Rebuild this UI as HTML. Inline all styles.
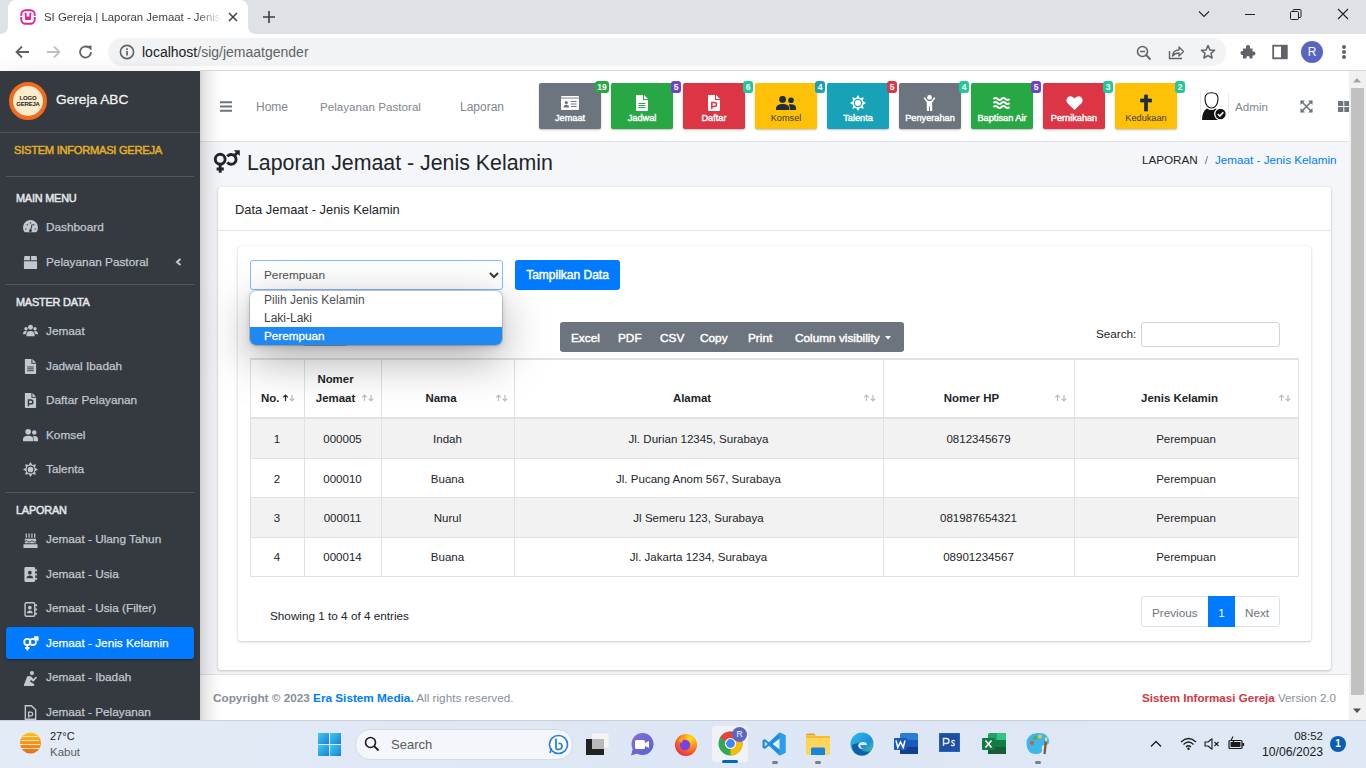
<!DOCTYPE html><html><head><meta charset="utf-8"><style>
html,body{margin:0;padding:0;width:1366px;height:768px;overflow:hidden;background:#fff;font-family:"Liberation Sans",sans-serif}
.a{position:absolute;white-space:nowrap}
svg.a{overflow:visible}
</style></head><body>
<div class="a" style="left:0px;top:0px;width:1366px;height:34px;background:#dee1e6;"></div>
<div class="a" style="left:8px;top:0;width:240px;height:34px;background:#fff;border-radius:8px 8px 0 0"></div>
<svg class="a" style="left:0px;top:26px;" width="8" height="8" viewBox="0 0 8 8"><path d="M0 8 Q8 8 8 0 L8 8Z" fill="#fff"/></svg>
<svg class="a" style="left:248px;top:26px;" width="8" height="8" viewBox="0 0 8 8"><path d="M8 8 Q0 8 0 0 L0 8Z" fill="#fff"/></svg>
<svg class="a" style="left:20px;top:9px;" width="16" height="16" viewBox="0 0 16 16"><rect x="1.3" y="1.3" width="13.4" height="13.4" rx="4.2" fill="none" stroke="#e3228f" stroke-width="1.9"/><rect x="0" y="6.9" width="3" height="1.1" fill="#fff"/><rect x="13" y="6.9" width="3" height="1.1" fill="#fff"/><path d="M4.6 3.8 H6.4 L6.9 8.6 L7.6 7.2 H8.4 L9.1 8.6 L9.6 3.8 H11.4 L10.8 11 H5.2Z" fill="#e3228f"/></svg>
<div class="a " style="left:44px;top:9.55px;font-size:11.4px;line-height:15px;color:#3c4043;font-weight:normal;width:178px;overflow:hidden;-webkit-mask-image:linear-gradient(90deg,#000 86%,transparent 100%)">SI Gereja | Laporan Jemaat - Jenis</div>
<svg class="a" style="left:227px;top:11px;" width="12" height="12" viewBox="0 0 12 12"><path d="M2 2 L10 10 M10 2 L2 10" stroke="#3c4043" stroke-width="1.5"/></svg>
<svg class="a" style="left:262px;top:10px;" width="14" height="14" viewBox="0 0 14 14"><path d="M7 1 V13 M1 7 H13" stroke="#3c4043" stroke-width="1.6"/></svg>
<svg class="a" style="left:1198px;top:10px;" width="12" height="8" viewBox="0 0 12 8"><path d="M1 1.5 L6 6.5 L11 1.5" stroke="#202124" stroke-width="1.1" fill="none"/></svg>
<div class="a" style="left:1245px;top:14px;width:10px;height:1px;background:#202124;"></div>
<svg class="a" style="left:1290px;top:9px;" width="12" height="12" viewBox="0 0 12 12"><rect x="0.5" y="2.5" width="8" height="8" rx="1" fill="none" stroke="#202124"/><path d="M3 2.5 V1.5 Q3 0.5 4 0.5 H10 Q11 0.5 11 1.5 V7.5 Q11 8.5 10 8.5 H8.5" fill="none" stroke="#202124"/></svg>
<svg class="a" style="left:1337px;top:8px;" width="12" height="12" viewBox="0 0 12 12"><path d="M1 1 L11 11 M11 1 L1 11" stroke="#202124" stroke-width="1.1"/></svg>
<div class="a" style="left:0px;top:34px;width:1366px;height:36px;background:#fff;"></div>
<div class="a" style="left:200px;top:70px;width:1166px;height:1px;background:#d9d9d9;"></div>
<svg class="a" style="left:14px;top:44px;" width="16" height="16" viewBox="0 0 16 16"><path d="M15 8 H2.5 M8 2.5 L2.5 8 L8 13.5" stroke="#5f6368" stroke-width="1.8" fill="none"/></svg>
<svg class="a" style="left:46px;top:44px;" width="16" height="16" viewBox="0 0 16 16"><path d="M1 8 H13.5 M8 2.5 L13.5 8 L8 13.5" stroke="#bdc1c6" stroke-width="1.8" fill="none"/></svg>
<svg class="a" style="left:78px;top:44px;" width="16" height="16" viewBox="0 0 16 16"><path d="M13 8 A5.5 5.5 0 1 1 11 3.8" stroke="#5f6368" stroke-width="1.8" fill="none"/><path d="M8.5 2 L13.5 1.5 L13.5 6.5Z" fill="#5f6368"/></svg>
<div class="a" style="left:108px;top:38px;width:1118px;height:28px;background:#f1f3f4;border-radius:14px"></div>
<svg class="a" style="left:119px;top:44px;" width="16" height="16" viewBox="0 0 16 16"><circle cx="8" cy="8" r="6.6" stroke="#5f6368" stroke-width="1.6" fill="none"/><rect x="7.2" y="7" width="1.7" height="4.5" fill="#5f6368"/><rect x="7.2" y="4.3" width="1.7" height="1.7" fill="#5f6368"/></svg>
<div class="a " style="left:142px;top:43.15px;font-size:14px;line-height:18px;color:#5f6368;font-weight:normal;"><span style="color:#202124">localhost</span>/sig/jemaatgender</div>
<svg class="a" style="left:1136px;top:45px;" width="16" height="16" viewBox="0 0 16 16"><circle cx="6.5" cy="6.5" r="5" stroke="#5f6368" stroke-width="1.6" fill="none"/><path d="M10 10 L14.5 14.5" stroke="#5f6368" stroke-width="1.8"/><path d="M4 6.5 H9" stroke="#5f6368" stroke-width="1.5"/></svg>
<svg class="a" style="left:1168px;top:44px;" width="17" height="16" viewBox="0 0 17 16"><path d="M1.5 7 V14.5 H14" stroke="#5f6368" stroke-width="1.4" fill="none"/><path d="M4.5 12 Q5 6 11 6 V3 L15.5 7.5 L11 12 V9 Q7 9 4.5 12Z" stroke="#5f6368" stroke-width="1.3" fill="none" stroke-linejoin="round"/></svg>
<svg class="a" style="left:1200px;top:44px;" width="16" height="16" viewBox="0 0 16 16"><path d="M8 1.5 L9.9 5.9 L14.6 6.3 L11 9.4 L12.1 14 L8 11.6 L3.9 14 L5 9.4 L1.4 6.3 L6.1 5.9Z" stroke="#5f6368" stroke-width="1.5" fill="none" stroke-linejoin="round"/></svg>
<svg class="a" style="left:1240px;top:44px;" width="16" height="16" viewBox="0 0 16 16"><path d="M3 4.5 H6 Q5.5 1 8 1 Q10.5 1 10 4.5 H12.5 V7.5 Q15.5 7 15.5 9.5 Q15.5 12 12.5 11.5 V14.5 H9.5 Q10 12 8 12 Q6 12 6.5 14.5 H3 V11 Q0.5 11.5 0.5 9 Q0.5 6.5 3 7Z" fill="#5f6368"/></svg>
<svg class="a" style="left:1272px;top:44px;" width="16" height="16" viewBox="0 0 16 16"><rect x="1.2" y="1.7" width="13.6" height="12.6" stroke="#5f6368" stroke-width="1.8" fill="none"/><rect x="9" y="2" width="5.5" height="12" fill="#5f6368"/></svg>
<div class="a" style="left:1301px;top:41px;width:22px;height:22px;border-radius:50%;background:#5865c2;color:#fff;font-size:12px;line-height:22px;text-align:center">R</div>
<div class="a" style="left:1342px;top:45px;width:4px;height:4px;border-radius:50%;background:#5f6368"></div>
<div class="a" style="left:1342px;top:50px;width:4px;height:4px;border-radius:50%;background:#5f6368"></div>
<div class="a" style="left:1342px;top:55px;width:4px;height:4px;border-radius:50%;background:#5f6368"></div>
<div class="a" style="left:0px;top:71px;width:200px;height:649px;background:#343a40;box-shadow:0 14px 28px rgba(0,0,0,.25),0 10px 10px rgba(0,0,0,.22)"></div>
<div class="a" style="left:9px;top:82px;width:30px;height:30px;border-radius:50%;border:4px solid #f26b1d;background:#fdeccb"></div>
<div class="a" style="left:9px;top:95px;width:38px;text-align:center;font-size:6px;line-height:6px;font-weight:bold;color:#222;letter-spacing:-0.2px">LOGO<br>GEREJA</div>
<div class="a " style="left:56px;top:91.25px;font-size:13.7px;line-height:18px;color:#f2f2f2;font-weight:normal;-webkit-text-stroke:0.3px #f2f2f2">Gereja ABC</div>
<div class="a" style="left:0px;top:132px;width:200px;height:1px;background:#4b545c;"></div>
<div class="a " style="left:14px;top:143.12px;font-size:11.2px;line-height:15px;color:#e0ae28;font-weight:normal;-webkit-text-stroke:0.5px #e0ae28;letter-spacing:-0.3px">SISTEM INFORMASI GEREJA</div>
<div class="a" style="left:6px;top:176px;width:188px;height:1px;background:#4f5962;"></div>
<div class="a" style="left:6px;top:284px;width:188px;height:1px;background:#4f5962;"></div>
<div class="a" style="left:6px;top:492px;width:188px;height:1px;background:#4f5962;"></div>
<div class="a " style="left:16px;top:191.22px;font-size:10.9px;line-height:14px;color:#e4e6e9;font-weight:normal;-webkit-text-stroke:0.5px #e4e6e9;letter-spacing:-0.2px">MAIN MENU</div>
<div class="a " style="left:16px;top:295.22px;font-size:10.9px;line-height:14px;color:#e4e6e9;font-weight:normal;-webkit-text-stroke:0.5px #e4e6e9;letter-spacing:-0.2px">MASTER DATA</div>
<div class="a " style="left:16px;top:503.22px;font-size:10.9px;line-height:14px;color:#e4e6e9;font-weight:normal;-webkit-text-stroke:0.5px #e4e6e9;letter-spacing:-0.2px">LAPORAN</div>
<svg class="a" style="left:22.5px;top:220.4px;" width="15" height="15" viewBox="0 0 16 16"><path d="M1.8 13 A8 8 0 1 1 14.2 13 Z" fill="#c2c7d0"/><path d="M8 11.5 L9.8 4.5" stroke="#343a40" stroke-width="1.1"/><circle cx="7.9" cy="11.4" r="1.5" fill="#343a40"/><circle cx="3" cy="9.5" r=".75" fill="#343a40"/><circle cx="13" cy="9.5" r=".75" fill="#343a40"/><circle cx="4.5" cy="5" r=".75" fill="#343a40"/><circle cx="8" cy="3.2" r=".75" fill="#343a40"/><circle cx="11.5" cy="5" r=".75" fill="#343a40"/></svg>
<div class="a " style="left:46px;top:220.21px;font-size:11.8px;line-height:15px;color:#c2c7d0;font-weight:normal;-webkit-text-stroke:0.25px #c2c7d0">Dashboard</div>
<svg class="a" style="left:22.5px;top:254.89999999999998px;" width="15" height="15" viewBox="0 0 16 16"><path d="M1.5 1 H7.4 V5.5 H1 Z M8.6 1 H14.5 L15 5.5 H8.6Z M1 6.6 H15 V15 H1Z" fill="#c2c7d0"/></svg>
<div class="a " style="left:46px;top:254.71px;font-size:11.8px;line-height:15px;color:#c2c7d0;font-weight:normal;-webkit-text-stroke:0.25px #c2c7d0">Pelayanan Pastoral</div>
<svg class="a" style="left:22.5px;top:324.4px;" width="15" height="15" viewBox="0 0 16 16"><circle cx="8" cy="3.4" r="2.6" fill="#c2c7d0"/><circle cx="3.2" cy="5" r="1.8" fill="#c2c7d0"/><circle cx="12.8" cy="5" r="1.8" fill="#c2c7d0"/><path d="M3.5 13 Q3.5 7.4 8 7.4 Q12.5 7.4 12.5 13Z" fill="#c2c7d0"/><path d="M0 11 Q0 7.5 3 7.5 Q4.2 7.5 4.5 8 Q2.8 9.5 2.8 11Z M16 11 Q16 7.5 13 7.5 Q11.8 7.5 11.5 8 Q13.2 9.5 13.2 11Z" fill="#c2c7d0"/></svg>
<div class="a " style="left:46px;top:324.21px;font-size:11.8px;line-height:15px;color:#c2c7d0;font-weight:normal;-webkit-text-stroke:0.25px #c2c7d0">Jemaat</div>
<svg class="a" style="left:22.5px;top:358.9px;" width="15" height="15" viewBox="0 0 16 16"><path d="M2 0 H9 V5 H14 V15 Q14 16 13 16 H3 Q2 16 2 15Z M10 0 L14 4 H10Z" fill="#c2c7d0"/><path d="M4.5 8.5 H11.5 M4.5 10.5 H11.5 M4.5 12.5 H11.5" stroke="#343a40" stroke-width="1"/></svg>
<div class="a " style="left:46px;top:358.71px;font-size:11.8px;line-height:15px;color:#c2c7d0;font-weight:normal;-webkit-text-stroke:0.25px #c2c7d0">Jadwal Ibadah</div>
<svg class="a" style="left:22.5px;top:393.4px;" width="15" height="15" viewBox="0 0 16 16"><path d="M2 0 H9 V5 H14 V15 Q14 16 13 16 H3 Q2 16 2 15Z M10 0 L14 4 H10Z" fill="#c2c7d0"/><path d="M5.8 14 V7.5 H8.5 Q10.5 7.5 10.5 9.5 Q10.5 11.5 8.5 11.5 H5.8" stroke="#343a40" stroke-width="1.5" fill="none"/></svg>
<div class="a " style="left:46px;top:393.21px;font-size:11.8px;line-height:15px;color:#c2c7d0;font-weight:normal;-webkit-text-stroke:0.25px #c2c7d0">Daftar Pelayanan</div>
<svg class="a" style="left:22.5px;top:427.9px;" width="15" height="15" viewBox="0 0 16 16"><circle cx="5.5" cy="4" r="3" fill="#c2c7d0"/><circle cx="12" cy="4.8" r="2.4" fill="#c2c7d0"/><path d="M0 14 V12 Q0 8.2 5.5 8.2 Q11 8.2 11 12 V14Z" fill="#c2c7d0"/><path d="M11.5 14 V12 Q11.5 10 10.3 8.8 Q11 8.4 12 8.4 Q16 8.4 16 11.5 V14Z" fill="#c2c7d0"/></svg>
<div class="a " style="left:46px;top:427.71px;font-size:11.8px;line-height:15px;color:#c2c7d0;font-weight:normal;-webkit-text-stroke:0.25px #c2c7d0">Komsel</div>
<svg class="a" style="left:22.5px;top:462.4px;" width="15" height="15" viewBox="0 0 16 16"><path d="M8.00 0.00 L9.99 3.20 L13.66 2.34 L12.80 6.01 L16.00 8.00 L12.80 9.99 L13.66 13.66 L9.99 12.80 L8.00 16.00 L6.01 12.80 L2.34 13.66 L3.20 9.99 L0.00 8.00 L3.20 6.01 L2.34 2.34 L6.01 3.20Z" fill="#c2c7d0"/><circle cx="8" cy="8" r="3.6" fill="none" stroke="#343a40" stroke-width="1.2"/></svg>
<div class="a " style="left:46px;top:462.21px;font-size:11.8px;line-height:15px;color:#c2c7d0;font-weight:normal;-webkit-text-stroke:0.25px #c2c7d0">Talenta</div>
<svg class="a" style="left:22.5px;top:532.6px;" width="15" height="15" viewBox="0 0 16 16"><path d="M2 6 H14 V11 H2Z M0.5 12 H15.5 V16 H0.5Z" fill="#c2c7d0"/><path d="M3.5 0.5 V5 M6.5 0.5 V5 M9.5 0.5 V5 M12.5 0.5 V5" stroke="#c2c7d0" stroke-width="1.3"/><path d="M2 9 Q4 7.5 5 9 Q6.5 10.5 8 9 Q9.5 7.5 11 9 Q12.5 10.5 14 9" stroke="#343a40" stroke-width="1" fill="none"/></svg>
<div class="a " style="left:46px;top:532.41px;font-size:11.8px;line-height:15px;color:#c2c7d0;font-weight:normal;-webkit-text-stroke:0.25px #c2c7d0">Jemaat - Ulang Tahun</div>
<svg class="a" style="left:22.5px;top:567.1px;" width="15" height="15" viewBox="0 0 16 16"><rect x="1.5" y="0" width="11.5" height="16" rx="1.5" fill="#c2c7d0"/><rect x="13" y="2.5" width="2" height="2" fill="#c2c7d0"/><rect x="13" y="7" width="2" height="2" fill="#c2c7d0"/><rect x="13" y="11.5" width="2" height="2" fill="#c2c7d0"/><circle cx="7.3" cy="6" r="2" fill="#343a40"/><path d="M3.8 12 Q3.8 9 7.3 9 Q10.8 9 10.8 12Z" fill="#343a40"/></svg>
<div class="a " style="left:46px;top:566.91px;font-size:11.8px;line-height:15px;color:#c2c7d0;font-weight:normal;-webkit-text-stroke:0.25px #c2c7d0">Jemaat - Usia</div>
<svg class="a" style="left:22.5px;top:601.6px;" width="15" height="15" viewBox="0 0 16 16"><rect x="2.2" y="0.75" width="10.3" height="14.5" rx="1.5" fill="none" stroke="#c2c7d0" stroke-width="1.5"/><rect x="13" y="2.5" width="2" height="2" fill="#c2c7d0"/><rect x="13" y="7" width="2" height="2" fill="#c2c7d0"/><rect x="13" y="11.5" width="2" height="2" fill="#c2c7d0"/><circle cx="7.3" cy="6" r="2" fill="#c2c7d0"/><path d="M4.3 12 Q4.3 9 7.3 9 Q10.3 9 10.3 12Z" fill="#c2c7d0"/></svg>
<div class="a " style="left:46px;top:601.41px;font-size:11.8px;line-height:15px;color:#c2c7d0;font-weight:normal;-webkit-text-stroke:0.25px #c2c7d0">Jemaat - Usia (Filter)</div>
<div class="a" style="left:6px;top:627px;width:188px;height:32px;background:#007bff;border-radius:3px;box-shadow:0 1px 3px rgba(0,0,0,.12),0 1px 2px rgba(0,0,0,.24)"></div>
<svg class="a" style="left:22.5px;top:636.1px;" width="15" height="15" viewBox="0 0 16 16"><circle cx="4.6" cy="6.3" r="3.3" fill="none" stroke="#fff" stroke-width="1.9"/><path d="M4.6 9.6 V15.5 M2.3 12.8 H6.9" stroke="#fff" stroke-width="1.9"/><circle cx="10.5" cy="6.3" r="3.3" fill="none" stroke="#fff" stroke-width="1.9"/><path d="M12.8 4 L15.3 1.5 M11.8 1.1 H15.7 V5" stroke="#fff" stroke-width="1.9" fill="none"/></svg>
<div class="a " style="left:46px;top:635.91px;font-size:11.8px;line-height:15px;color:#fff;font-weight:normal;-webkit-text-stroke:0.25px #fff">Jemaat - Jenis Kelamin</div>
<svg class="a" style="left:22.5px;top:670.6px;" width="15" height="15" viewBox="0 0 16 16"><circle cx="9.5" cy="2.2" r="2.2" fill="#c2c7d0"/><path d="M5 5.5 Q7 4.8 9 6 L11 8.5 L14 5.8 L15 7 L11.5 11 Q10.8 11.7 10 11 L8.5 9.3 L7.6 11.5 L11 13.2 Q12.5 14 12 15.2 Q11.6 16 10.6 16 H1.5 Q0.8 16 1 15 L4.2 6.5Z" fill="#c2c7d0"/></svg>
<div class="a " style="left:46px;top:670.41px;font-size:11.8px;line-height:15px;color:#c2c7d0;font-weight:normal;-webkit-text-stroke:0.25px #c2c7d0">Jemaat - Ibadah</div>
<svg class="a" style="left:22.5px;top:705.1px;" width="15" height="15" viewBox="0 0 16 16"><path d="M2.5 0.75 H9 L13.5 5 V15.25 H2.5Z" stroke="#c2c7d0" stroke-width="1.5" fill="none"/><path d="M6 13.5 V7.5 H8.3 Q10.3 7.5 10.3 9.5 Q10.3 11.5 8.3 11.5 H6" stroke="#c2c7d0" stroke-width="1.4" fill="none"/></svg>
<div class="a " style="left:46px;top:704.91px;font-size:11.8px;line-height:15px;color:#c2c7d0;font-weight:normal;-webkit-text-stroke:0.25px #c2c7d0">Jemaat - Pelayanan</div>
<svg class="a" style="left:175px;top:258px;" width="7" height="8" viewBox="0 0 7 8"><path d="M5.5 1 L2 4 L5.5 7" stroke="#c2c7d0" stroke-width="2" fill="none"/></svg>
<div class="a" style="left:200px;top:71px;width:1150px;height:649px;background:#f4f6f9;"></div>
<div class="a" style="left:200px;top:71px;width:1150px;height:70px;background:#fff;"></div>
<div class="a" style="left:200px;top:141px;width:1150px;height:1px;background:#dee2e6;"></div>
<svg class="a" style="left:220px;top:101px;" width="12" height="11" viewBox="0 0 12 11"><path d="M0 1.3 H12 M0 5.5 H12 M0 9.7 H12" stroke="#6c757d" stroke-width="2"/></svg>
<div class="a " style="left:256px;top:98.84px;font-size:12px;line-height:16px;color:#7f868c;font-weight:normal;">Home</div>
<div class="a " style="left:320px;top:99.46px;font-size:11.65px;line-height:15px;color:#7f868c;font-weight:normal;">Pelayanan Pastoral</div>
<div class="a " style="left:460px;top:98.84px;font-size:12px;line-height:16px;color:#7f868c;font-weight:normal;">Laporan</div>
<div class="a" style="left:539px;top:83px;width:62px;height:46px;background:#6c757d;border-radius:2px;box-shadow:0 1px 2px rgba(0,0,0,.25)"></div>
<div class="a" style="left:539.0px;width:62px;text-align:center;top:112.01px;font-size:9.2px;line-height:12px;color:#fff;font-weight:normal;-webkit-text-stroke:0.4px #fff">Jemaat</div>
<div class="a" style="left:595px;top:81px;width:14px;height:12px;border-radius:3px;background:#28a745;color:#fff;font-size:8.5px;font-weight:bold;line-height:12px;text-align:center">19</div>
<div class="a" style="left:611px;top:83px;width:62px;height:46px;background:#28a745;border-radius:2px;box-shadow:0 1px 2px rgba(0,0,0,.25)"></div>
<div class="a" style="left:611.0px;width:62px;text-align:center;top:112.01px;font-size:9.2px;line-height:12px;color:#fff;font-weight:normal;-webkit-text-stroke:0.4px #fff">Jadwal</div>
<div class="a" style="left:671px;top:81px;width:10px;height:12px;border-radius:3px;background:#6f42c1;color:#fff;font-size:8.5px;font-weight:bold;line-height:12px;text-align:center">5</div>
<div class="a" style="left:683px;top:83px;width:62px;height:46px;background:#dc3545;border-radius:2px;box-shadow:0 1px 2px rgba(0,0,0,.25)"></div>
<div class="a" style="left:683.0px;width:62px;text-align:center;top:112.01px;font-size:9.2px;line-height:12px;color:#fff;font-weight:normal;-webkit-text-stroke:0.4px #fff">Daftar</div>
<div class="a" style="left:743px;top:81px;width:10px;height:12px;border-radius:3px;background:#20c997;color:#fff;font-size:8.5px;font-weight:bold;line-height:12px;text-align:center">6</div>
<div class="a" style="left:755px;top:83px;width:62px;height:46px;background:#ffc107;border-radius:2px;box-shadow:0 1px 2px rgba(0,0,0,.25)"></div>
<div class="a" style="left:755.0px;width:62px;text-align:center;top:112.01px;font-size:9.2px;line-height:12px;color:#1f2d3d;font-weight:normal;color:#343a40">Komsel</div>
<div class="a" style="left:815px;top:81px;width:10px;height:12px;border-radius:3px;background:#17a2b8;color:#fff;font-size:8.5px;font-weight:bold;line-height:12px;text-align:center">4</div>
<div class="a" style="left:827px;top:83px;width:62px;height:46px;background:#17a2b8;border-radius:2px;box-shadow:0 1px 2px rgba(0,0,0,.25)"></div>
<div class="a" style="left:827.0px;width:62px;text-align:center;top:112.01px;font-size:9.2px;line-height:12px;color:#fff;font-weight:normal;-webkit-text-stroke:0.4px #fff">Talenta</div>
<div class="a" style="left:887px;top:81px;width:10px;height:12px;border-radius:3px;background:#dc3545;color:#fff;font-size:8.5px;font-weight:bold;line-height:12px;text-align:center">5</div>
<div class="a" style="left:899px;top:83px;width:62px;height:46px;background:#6c757d;border-radius:2px;box-shadow:0 1px 2px rgba(0,0,0,.25)"></div>
<div class="a" style="left:899.0px;width:62px;text-align:center;top:112.01px;font-size:9.2px;line-height:12px;color:#fff;font-weight:normal;-webkit-text-stroke:0.4px #fff">Penyerahan</div>
<div class="a" style="left:959px;top:81px;width:10px;height:12px;border-radius:3px;background:#20c997;color:#fff;font-size:8.5px;font-weight:bold;line-height:12px;text-align:center">4</div>
<div class="a" style="left:971px;top:83px;width:62px;height:46px;background:#28a745;border-radius:2px;box-shadow:0 1px 2px rgba(0,0,0,.25)"></div>
<div class="a" style="left:971.0px;width:62px;text-align:center;top:112.01px;font-size:9.2px;line-height:12px;color:#fff;font-weight:normal;-webkit-text-stroke:0.4px #fff">Baptisan Air</div>
<div class="a" style="left:1031px;top:81px;width:10px;height:12px;border-radius:3px;background:#6f42c1;color:#fff;font-size:8.5px;font-weight:bold;line-height:12px;text-align:center">5</div>
<div class="a" style="left:1043px;top:83px;width:62px;height:46px;background:#dc3545;border-radius:2px;box-shadow:0 1px 2px rgba(0,0,0,.25)"></div>
<div class="a" style="left:1043.0px;width:62px;text-align:center;top:112.01px;font-size:9.2px;line-height:12px;color:#fff;font-weight:normal;-webkit-text-stroke:0.4px #fff">Pernikahan</div>
<div class="a" style="left:1103px;top:81px;width:10px;height:12px;border-radius:3px;background:#20c997;color:#fff;font-size:8.5px;font-weight:bold;line-height:12px;text-align:center">3</div>
<div class="a" style="left:1115px;top:83px;width:62px;height:46px;background:#ffc107;border-radius:2px;box-shadow:0 1px 2px rgba(0,0,0,.25)"></div>
<div class="a" style="left:1115.0px;width:62px;text-align:center;top:112.01px;font-size:9.2px;line-height:12px;color:#1f2d3d;font-weight:normal;color:#343a40">Kedukaan</div>
<div class="a" style="left:1175px;top:81px;width:10px;height:12px;border-radius:3px;background:#20c997;color:#fff;font-size:8.5px;font-weight:bold;line-height:12px;text-align:center">2</div>
<svg class="a" style="left:561px;top:96px;" width="18" height="14" viewBox="0 0 18 14"><rect x="0" y="0" width="18" height="14" rx="1" fill="#fff"/><rect x="0" y="1.6" width="18" height="0.9" fill="#6c757d"/><circle cx="5.3" cy="6.6" r="1.6" fill="#6c757d"/><path d="M2.5 11.5 Q2.5 8.8 5.3 8.8 Q8.1 8.8 8.1 11.5Z" fill="#6c757d"/><path d="M10 5.5 H15.5 M10 8 H15.5 M10 10.5 H15.5" stroke="#6c757d" stroke-width="1"/></svg>
<svg class="a" style="left:636px;top:95px;" width="12" height="16" viewBox="2 0 12 16"><path d="M2 0 H9 V5 H14 V15 Q14 16 13 16 H3 Q2 16 2 15Z M10 0 L14 4 H10Z" fill="#fff"/><path d="M4.5 8.5 H11.5 M4.5 10.5 H11.5 M4.5 12.5 H11.5" stroke="#28a745" stroke-width="1"/></svg>
<svg class="a" style="left:708px;top:95px;" width="12" height="16" viewBox="2 0 12 16"><path d="M2 0 H9 V5 H14 V15 Q14 16 13 16 H3 Q2 16 2 15Z M10 0 L14 4 H10Z" fill="#fff"/><path d="M5.8 14 V7.5 H8.5 Q10.5 7.5 10.5 9.5 Q10.5 11.5 8.5 11.5 H5.8" stroke="#dc3545" stroke-width="1.5" fill="none"/></svg>
<svg class="a" style="left:776px;top:96px;" width="20" height="14" viewBox="0 0 20 14"><circle cx="6.6" cy="3.4" r="3.4" fill="#1f2d3d"/><circle cx="15" cy="4.2" r="2.8" fill="#1f2d3d"/><path d="M0 14 V12.5 Q0 8 6.6 8 Q13.2 8 13.2 12.5 V14Z" fill="#1f2d3d"/><path d="M13.8 14 V12.5 Q13.8 10 12.6 8.6 Q13.6 8.2 15 8.2 Q20 8.2 20 11.8 V14Z" fill="#1f2d3d"/></svg>
<svg class="a" style="left:850px;top:95px;" width="16" height="16" viewBox="0 0 16 16"><path d="M8.00 0.00 L9.99 3.20 L13.66 2.34 L12.80 6.01 L16.00 8.00 L12.80 9.99 L13.66 13.66 L9.99 12.80 L8.00 16.00 L6.01 12.80 L2.34 13.66 L3.20 9.99 L0.00 8.00 L3.20 6.01 L2.34 2.34 L6.01 3.20Z" fill="#fff"/><circle cx="8" cy="8" r="3.6" fill="none" stroke="#17a2b8" stroke-width="1.2"/></svg>
<svg class="a" style="left:923px;top:95px;" width="13" height="16" viewBox="0 0 13 16"><circle cx="6.5" cy="2.4" r="2.4" fill="#fff"/><path d="M0.6 3 L1.8 2.2 L5 6 H8 L11.2 2.2 L12.4 3 L9.2 7.5 V16 H7 V11.5 H6 V16 H3.8 V7.5Z" fill="#fff"/></svg>
<svg class="a" style="left:993px;top:97px;" width="18" height="12" viewBox="0 0 18 12"><path d="M0.5 2 Q2.5 0 4.5 2 T8.5 2 T12.5 2 T16.5 2 M0.5 6 Q2.5 4 4.5 6 T8.5 6 T12.5 6 T16.5 6 M0.5 10 Q2.5 8 4.5 10 T8.5 10 T12.5 10 T16.5 10" stroke="#fff" stroke-width="1.8" fill="none"/></svg>
<svg class="a" style="left:1066px;top:96px;" width="17" height="14" viewBox="0 0 17 14"><path d="M8.5 14 L1.5 7.2 Q-0.5 5 0.8 2.5 Q2.5 -0.3 5.5 0.4 Q7.5 1 8.5 2.6 Q9.5 1 11.5 0.4 Q14.5 -0.3 16.2 2.5 Q17.5 5 15.5 7.2Z" fill="#fff"/></svg>
<svg class="a" style="left:1140px;top:95px;" width="12" height="16" viewBox="0 0 12 16"><path d="M4.5 0 H7.5 V4 H11.5 V7 H7.5 V16 H4.5 V7 H0.5 V4 H4.5Z" fill="#1f2d3d" stroke="#1f2d3d" stroke-width=".8" stroke-linejoin="round"/></svg>
<div class="a" style="left:1200px;top:92px;width:1px;height:28px;background:#e9e9e9;"></div>
<div class="a" style="left:1228px;top:92px;width:1px;height:28px;background:#ececec;"></div>
<svg class="a" style="left:1201px;top:92px;" width="27" height="28" viewBox="0 0 27 28"><path d="M4 6.5 Q4 0.8 10.5 0.8 Q17 0.8 17 6.5 Q17 12.5 13.5 15 Q10.5 17 7.5 15 Q4 12.5 4 6.5Z" fill="#fff" stroke="#111" stroke-width="1.1"/><path d="M1 28 Q1 19.5 6 16.5 Q10.5 19.5 15 16.5 Q19 18 21 21 V28Z" fill="#111"/><circle cx="19.5" cy="22" r="5.8" fill="#111" stroke="#fff" stroke-width="1.3"/><path d="M16.8 22 L18.8 24 L22.3 20.3" stroke="#fff" stroke-width="1.6" fill="none"/></svg>
<div class="a " style="left:1235px;top:99.36px;font-size:11.65px;line-height:15px;color:#7f868c;font-weight:normal;">Admin</div>
<svg class="a" style="left:1300px;top:100px;" width="13" height="13" viewBox="0 0 13 13"><path d="M1 1 L12 12 M12 1 L1 12" stroke="#6c757d" stroke-width="1.6"/><path d="M0.5 0.5 H5 L0.5 5Z M12.5 0.5 H8 L12.5 5Z M0.5 12.5 H5 L0.5 8Z M12.5 12.5 H8 L12.5 8Z" fill="#6c757d"/></svg>
<svg class="a" style="left:1338px;top:101px;" width="12" height="11" viewBox="0 0 12 11"><rect x="0" y="0" width="5.3" height="5" fill="#6c757d"/><rect x="6.3" y="0" width="5.3" height="5" fill="#6c757d"/><rect x="0" y="6" width="5.3" height="5" fill="#6c757d"/><rect x="6.3" y="6" width="5.3" height="5" fill="#6c757d"/></svg>
<svg class="a" style="left:214px;top:150px;" width="26" height="23" viewBox="0 0 26 23"><circle cx="6.2" cy="9.2" r="4.9" fill="none" stroke="#212529" stroke-width="2.9"/><path d="M6.2 14 V22.8 M2.6 19 H9.8" stroke="#212529" stroke-width="2.9"/><path d="M13.3 6.4 A4.9 4.9 0 1 1 13.3 12.4" fill="none" stroke="#212529" stroke-width="2.9"/><path d="M20.5 5.5 L24 2" stroke="#212529" stroke-width="2.9"/><path d="M19.8 0.2 H25.8 V6 L23.8 4 L21.8 2.2Z" fill="#212529"/></svg>
<div class="a " style="left:247px;top:148.61px;font-size:21.34px;line-height:28px;color:#212529;font-weight:normal;">Laporan Jemaat - Jenis Kelamin</div>
<div class="a" style="left:1036.5px;width:300px;text-align:right;top:152.45px;font-size:11.7px;line-height:15px;color:#212529;font-weight:normal;"><span style="color:#212529">LAPORAN</span><span style="color:#6c757d;padding:0 7px">/</span><span style="color:#007bff">Jemaat - Jenis Kelamin</span></div>
<div class="a" style="left:218px;top:187px;width:1113px;height:483px;background:#fff;border-radius:3px;box-shadow:0 0 1px rgba(0,0,0,.125),0 1px 3px rgba(0,0,0,.2)"></div>
<div class="a" style="left:218px;top:230px;width:1113px;height:1px;background:#e3e5e8;"></div>
<div class="a " style="left:235px;top:200.53px;font-size:12.9px;line-height:17px;color:#212529;font-weight:normal;">Data Jemaat - Jenis Kelamin</div>
<div class="a" style="left:238px;top:246px;width:1073px;height:395px;background:#fff;border-radius:3px;box-shadow:0 0 1px rgba(0,0,0,.125),0 1px 3px rgba(0,0,0,.2)"></div>
<div class="a " style="left:1096px;top:326.45px;font-size:11.7px;line-height:15px;color:#212529;font-weight:normal;">Search:</div>
<div class="a" style="left:1141px;top:322px;width:137px;height:23px;border:1px solid #ced4da;border-radius:3px;background:#fff"></div>
<div class="a" style="left:560px;top:322px;width:344px;height:30px;background:#6c757d;border-radius:3px"></div>
<div class="a " style="left:571px;top:330.61px;font-size:11.8px;line-height:15px;color:#fff;font-weight:normal;-webkit-text-stroke:0.45px #fff">Excel</div>
<div class="a " style="left:618px;top:330.61px;font-size:11.8px;line-height:15px;color:#fff;font-weight:normal;-webkit-text-stroke:0.45px #fff">PDF</div>
<div class="a " style="left:660px;top:330.61px;font-size:11.8px;line-height:15px;color:#fff;font-weight:normal;-webkit-text-stroke:0.45px #fff">CSV</div>
<div class="a " style="left:700px;top:330.61px;font-size:11.8px;line-height:15px;color:#fff;font-weight:normal;-webkit-text-stroke:0.45px #fff">Copy</div>
<div class="a " style="left:748px;top:330.61px;font-size:11.8px;line-height:15px;color:#fff;font-weight:normal;-webkit-text-stroke:0.45px #fff">Print</div>
<div class="a " style="left:795px;top:330.61px;font-size:11.8px;line-height:15px;color:#fff;font-weight:normal;-webkit-text-stroke:0.45px #fff">Column visibility</div>
<svg class="a" style="left:885px;top:336px;" width="6" height="4" viewBox="0 0 6 4"><path d="M0 0 H6 L3 3.5Z" fill="#fff"/></svg>
<div class="a" style="left:250px;top:358px;width:1049px;height:218px;background:#fff;"></div>
<div class="a" style="left:251px;top:419px;width:1047px;height:39px;background:#f2f2f2;"></div>
<div class="a" style="left:251px;top:497px;width:1047px;height:40px;background:#f2f2f2;"></div>
<div class="a" style="left:250px;top:358px;width:1049px;height:2px;background:#dee2e6;"></div>
<div class="a" style="left:250px;top:417px;width:1049px;height:2px;background:#dee2e6;"></div>
<div class="a" style="left:250px;top:458px;width:1049px;height:1px;background:#dee2e6;"></div>
<div class="a" style="left:250px;top:497px;width:1049px;height:1px;background:#dee2e6;"></div>
<div class="a" style="left:250px;top:537px;width:1049px;height:1px;background:#dee2e6;"></div>
<div class="a" style="left:250px;top:576px;width:1049px;height:1px;background:#dee2e6;"></div>
<div class="a" style="left:250px;top:358px;width:1px;height:219px;background:#dee2e6;"></div>
<div class="a" style="left:304px;top:358px;width:1px;height:219px;background:#dee2e6;"></div>
<div class="a" style="left:381px;top:358px;width:1px;height:219px;background:#dee2e6;"></div>
<div class="a" style="left:514px;top:358px;width:1px;height:219px;background:#dee2e6;"></div>
<div class="a" style="left:883px;top:358px;width:1px;height:219px;background:#dee2e6;"></div>
<div class="a" style="left:1074px;top:358px;width:1px;height:219px;background:#dee2e6;"></div>
<div class="a" style="left:1298px;top:358px;width:1px;height:219px;background:#dee2e6;"></div>
<div class="a " style="left:261px;top:391.33px;font-size:11.45px;line-height:15px;color:#212529;font-weight:bold;">No.</div>
<svg class="a" style="left:282px;top:394px;" width="14" height="8" viewBox="0 0 14 8"><path d="M3.5 7 V1 M1.2 3.3 L3.5 1 L5.8 3.3" stroke="#212529" stroke-width="1.2" fill="none"/><path d="M10 1 V7 M7.7 4.7 L10 7 L12.3 4.7" stroke="#b9bec3" stroke-width="1.2" fill="none"/></svg>
<div class="a" style="left:295.5px;width:80px;text-align:center;top:372.03px;font-size:11.45px;line-height:15px;color:#212529;font-weight:bold;">Nomer</div>
<div class="a" style="left:295.5px;width:80px;text-align:center;top:391.33px;font-size:11.45px;line-height:15px;color:#212529;font-weight:bold;">Jemaat</div>
<svg class="a" style="left:361px;top:394px;" width="14" height="8" viewBox="0 0 14 8"><path d="M3.5 7 V1 M1.2 3.3 L3.5 1 L5.8 3.3" stroke="#b9bec3" stroke-width="1.2" fill="none"/><path d="M10 1 V7 M7.7 4.7 L10 7 L12.3 4.7" stroke="#b9bec3" stroke-width="1.2" fill="none"/></svg>
<div class="a" style="left:381.0px;width:120px;text-align:center;top:391.33px;font-size:11.45px;line-height:15px;color:#212529;font-weight:bold;">Nama</div>
<svg class="a" style="left:495px;top:394px;" width="14" height="8" viewBox="0 0 14 8"><path d="M3.5 7 V1 M1.2 3.3 L3.5 1 L5.8 3.3" stroke="#b9bec3" stroke-width="1.2" fill="none"/><path d="M10 1 V7 M7.7 4.7 L10 7 L12.3 4.7" stroke="#b9bec3" stroke-width="1.2" fill="none"/></svg>
<div class="a" style="left:542.0px;width:300px;text-align:center;top:391.33px;font-size:11.45px;line-height:15px;color:#212529;font-weight:bold;">Alamat</div>
<svg class="a" style="left:863px;top:394px;" width="14" height="8" viewBox="0 0 14 8"><path d="M3.5 7 V1 M1.2 3.3 L3.5 1 L5.8 3.3" stroke="#b9bec3" stroke-width="1.2" fill="none"/><path d="M10 1 V7 M7.7 4.7 L10 7 L12.3 4.7" stroke="#b9bec3" stroke-width="1.2" fill="none"/></svg>
<div class="a" style="left:871.5px;width:200px;text-align:center;top:391.33px;font-size:11.45px;line-height:15px;color:#212529;font-weight:bold;">Nomer HP</div>
<svg class="a" style="left:1054px;top:394px;" width="14" height="8" viewBox="0 0 14 8"><path d="M3.5 7 V1 M1.2 3.3 L3.5 1 L5.8 3.3" stroke="#b9bec3" stroke-width="1.2" fill="none"/><path d="M10 1 V7 M7.7 4.7 L10 7 L12.3 4.7" stroke="#b9bec3" stroke-width="1.2" fill="none"/></svg>
<div class="a" style="left:1079.5px;width:200px;text-align:center;top:391.33px;font-size:11.45px;line-height:15px;color:#212529;font-weight:bold;">Jenis Kelamin</div>
<svg class="a" style="left:1278px;top:394px;" width="14" height="8" viewBox="0 0 14 8"><path d="M3.5 7 V1 M1.2 3.3 L3.5 1 L5.8 3.3" stroke="#b9bec3" stroke-width="1.2" fill="none"/><path d="M10 1 V7 M7.7 4.7 L10 7 L12.3 4.7" stroke="#b9bec3" stroke-width="1.2" fill="none"/></svg>
<div class="a" style="left:250.0px;width:54px;text-align:center;top:432.00px;font-size:11.55px;line-height:15px;color:#212529;font-weight:normal;">1</div>
<div class="a" style="left:304.0px;width:77px;text-align:center;top:432.00px;font-size:11.55px;line-height:15px;color:#212529;font-weight:normal;">000005</div>
<div class="a" style="left:381.0px;width:133px;text-align:center;top:432.00px;font-size:11.55px;line-height:15px;color:#212529;font-weight:normal;">Indah</div>
<div class="a" style="left:514.0px;width:369px;text-align:center;top:432.00px;font-size:11.55px;line-height:15px;color:#212529;font-weight:normal;">Jl. Durian 12345, Surabaya</div>
<div class="a" style="left:883.0px;width:191px;text-align:center;top:432.00px;font-size:11.55px;line-height:15px;color:#212529;font-weight:normal;">0812345679</div>
<div class="a" style="left:1074.0px;width:224px;text-align:center;top:432.00px;font-size:11.55px;line-height:15px;color:#212529;font-weight:normal;">Perempuan</div>
<div class="a" style="left:250.0px;width:54px;text-align:center;top:471.90px;font-size:11.55px;line-height:15px;color:#212529;font-weight:normal;">2</div>
<div class="a" style="left:304.0px;width:77px;text-align:center;top:471.90px;font-size:11.55px;line-height:15px;color:#212529;font-weight:normal;">000010</div>
<div class="a" style="left:381.0px;width:133px;text-align:center;top:471.90px;font-size:11.55px;line-height:15px;color:#212529;font-weight:normal;">Buana</div>
<div class="a" style="left:514.0px;width:369px;text-align:center;top:471.90px;font-size:11.55px;line-height:15px;color:#212529;font-weight:normal;">Jl. Pucang Anom 567, Surabaya</div>
<div class="a" style="left:883.0px;width:191px;text-align:center;top:471.90px;font-size:11.55px;line-height:15px;color:#212529;font-weight:normal;"></div>
<div class="a" style="left:1074.0px;width:224px;text-align:center;top:471.90px;font-size:11.55px;line-height:15px;color:#212529;font-weight:normal;">Perempuan</div>
<div class="a" style="left:250.0px;width:54px;text-align:center;top:510.50px;font-size:11.55px;line-height:15px;color:#212529;font-weight:normal;">3</div>
<div class="a" style="left:304.0px;width:77px;text-align:center;top:510.50px;font-size:11.55px;line-height:15px;color:#212529;font-weight:normal;">000011</div>
<div class="a" style="left:381.0px;width:133px;text-align:center;top:510.50px;font-size:11.55px;line-height:15px;color:#212529;font-weight:normal;">Nurul</div>
<div class="a" style="left:514.0px;width:369px;text-align:center;top:510.50px;font-size:11.55px;line-height:15px;color:#212529;font-weight:normal;">Jl Semeru 123, Surabaya</div>
<div class="a" style="left:883.0px;width:191px;text-align:center;top:510.50px;font-size:11.55px;line-height:15px;color:#212529;font-weight:normal;">081987654321</div>
<div class="a" style="left:1074.0px;width:224px;text-align:center;top:510.50px;font-size:11.55px;line-height:15px;color:#212529;font-weight:normal;">Perempuan</div>
<div class="a" style="left:250.0px;width:54px;text-align:center;top:549.70px;font-size:11.55px;line-height:15px;color:#212529;font-weight:normal;">4</div>
<div class="a" style="left:304.0px;width:77px;text-align:center;top:549.70px;font-size:11.55px;line-height:15px;color:#212529;font-weight:normal;">000014</div>
<div class="a" style="left:381.0px;width:133px;text-align:center;top:549.70px;font-size:11.55px;line-height:15px;color:#212529;font-weight:normal;">Buana</div>
<div class="a" style="left:514.0px;width:369px;text-align:center;top:549.70px;font-size:11.55px;line-height:15px;color:#212529;font-weight:normal;">Jl. Jakarta 1234, Surabaya</div>
<div class="a" style="left:883.0px;width:191px;text-align:center;top:549.70px;font-size:11.55px;line-height:15px;color:#212529;font-weight:normal;">08901234567</div>
<div class="a" style="left:1074.0px;width:224px;text-align:center;top:549.70px;font-size:11.55px;line-height:15px;color:#212529;font-weight:normal;">Perempuan</div>
<div class="a " style="left:270px;top:608.43px;font-size:11.74px;line-height:15px;color:#212529;font-weight:normal;">Showing 1 to 4 of 4 entries</div>
<div class="a" style="left:1141px;top:596px;width:137px;height:29px;border:1px solid #dee2e6;border-radius:3px;background:#fff"></div>
<div class="a" style="left:1208px;top:596px;width:27px;height:31px;background:#007bff;"></div>
<div class="a " style="left:1152px;top:605.05px;font-size:11.7px;line-height:15px;color:#6c757d;font-weight:normal;">Previous</div>
<div class="a" style="left:1208.0px;width:27px;text-align:center;top:605.05px;font-size:11.7px;line-height:15px;color:#fff;font-weight:normal;">1</div>
<div class="a " style="left:1245px;top:605.05px;font-size:11.7px;line-height:15px;color:#6c757d;font-weight:normal;">Next</div>
<div class="a" style="left:250px;top:260px;width:251px;height:28px;border:1px solid #80bdff;border-radius:3px;background:#fff"></div>
<div class="a " style="left:264px;top:268.41px;font-size:11.8px;line-height:15px;color:#495057;font-weight:normal;">Perempuan</div>
<svg class="a" style="left:489px;top:272px;" width="10" height="7" viewBox="0 0 10 7"><path d="M1 1 L5 5 L9 1" stroke="#343a40" stroke-width="2" fill="none"/></svg>
<div class="a" style="left:515px;top:260px;width:105px;height:30px;background:#007bff;border-radius:3px"></div>
<div class="a" style="left:515.0px;width:105px;text-align:center;top:267.34px;font-size:12px;line-height:16px;color:#fff;font-weight:normal;-webkit-text-stroke:0.45px #fff">Tampilkan Data</div>
<div class="a" style="left:303px;top:344px;width:44px;height:2px;background:#c4c8cc;border-radius:0 0 3px 3px"></div>
<div class="a" style="left:250px;top:291px;width:252px;height:54px;background:#fff;border-radius:6px;box-shadow:0 0 0 1px rgba(0,0,0,.16),0 2px 6px rgba(0,0,0,.14),0 14px 46px rgba(0,0,0,.34);overflow:hidden"><div style="position:absolute;left:0;top:36px;width:252px;height:18px;background:#1e88f3"></div></div>
<div class="a " style="left:264px;top:291.84px;font-size:12px;line-height:16px;color:#505050;font-weight:normal;">Pilih Jenis Kelamin</div>
<div class="a " style="left:264px;top:309.54px;font-size:12px;line-height:16px;color:#404040;font-weight:normal;">Laki-Laki</div>
<div class="a " style="left:264px;top:327.95px;font-size:11.7px;line-height:15px;color:#fff;font-weight:normal;-webkit-text-stroke:0.3px #fff">Perempuan</div>
<div class="a" style="left:200px;top:674px;width:1150px;height:46px;background:#fff;"></div>
<div class="a" style="left:200px;top:674px;width:1150px;height:1px;background:#dee2e6;"></div>
<div class="a " style="left:213px;top:690.23px;font-size:11.75px;line-height:15px;color:#869099;font-weight:normal;"><b>Copyright &copy; 2023 <span style="color:#007bff">Era Sistem Media.</span></b> All rights reserved.</div>
<div class="a" style="left:1036px;width:300px;text-align:right;top:689.88px;font-size:11.6px;line-height:15px;color:#869099;font-weight:normal;"><b style="color:#d0393f">Sistem Informasi Gereja</b> Version 2.0</div>
<div class="a" style="left:200px;top:71px;width:24px;height:649px;background:linear-gradient(90deg,rgba(0,0,0,.17),rgba(0,0,0,.11) 15%,rgba(0,0,0,.06) 40%,rgba(0,0,0,.02) 70%,rgba(0,0,0,0))"></div>
<div class="a" style="left:1349px;top:71px;width:17px;height:649px;background:#f1f1f1;"></div>
<div class="a" style="left:1351px;top:88px;width:13px;height:607px;background:#c1c1c1;"></div>
<svg class="a" style="left:1352px;top:77px;" width="10" height="6" viewBox="0 0 10 6"><path d="M1 5.5 L5 1 L9 5.5Z" fill="#a3a3a3"/></svg>
<svg class="a" style="left:1352px;top:708px;" width="10" height="6" viewBox="0 0 10 6"><path d="M1 0.5 L5 5 L9 0.5Z" fill="#505050"/></svg>
<div class="a" style="left:0;top:720px;width:1366px;height:48px;background:linear-gradient(90deg,#e3ecf6 0%,#dde6f4 50%,#dfe8f5 100%)"></div>
<div class="a" style="left:0px;top:720px;width:1366px;height:1px;background:#c9d0da;"></div>
<svg class="a" style="left:19px;top:732px;" width="23" height="22" viewBox="0 0 23 22"><defs><linearGradient id="wg" x1="0" y1="0" x2="0" y2="1"><stop offset="0" stop-color="#f9c51b"/><stop offset="1" stop-color="#e8681c"/></linearGradient></defs><circle cx="11.5" cy="11" r="10.5" fill="url(#wg)"/><path d="M4 4.5 H19 M2.5 8.5 H20 M1 12.5 H21 M2.5 16.5 H20" stroke="#fbe9c0" stroke-width="1" opacity=".9"/></svg>
<div class="a " style="left:50px;top:728.99px;font-size:11px;line-height:14px;color:#1b1b1b;font-weight:normal;">27°C</div>
<div class="a " style="left:50px;top:744.52px;font-size:11.5px;line-height:15px;color:#5d5d5d;font-weight:normal;">Kabut</div>
<svg class="a" style="left:318px;top:733px;" width="23" height="23" viewBox="0 0 23 23"><defs><linearGradient id="wl" x1="0" y1="0" x2="1" y2="1"><stop offset="0" stop-color="#3ccbf4"/><stop offset="1" stop-color="#1a7fd4"/></linearGradient></defs><rect x="0" y="0" width="11" height="11" fill="url(#wl)"/><rect x="12" y="0" width="11" height="11" fill="url(#wl)"/><rect x="0" y="12" width="11" height="11" fill="url(#wl)"/><rect x="12" y="12" width="11" height="11" fill="url(#wl)"/></svg>
<div class="a" style="left:355px;top:729px;width:216px;height:29px;border-radius:15px;background:#f3f6fb;border:1px solid #d5dbe4"></div>
<svg class="a" style="left:364px;top:736px;" width="16" height="16" viewBox="0 0 16 16"><circle cx="6.5" cy="6.5" r="5" stroke="#1b1b1b" stroke-width="1.6" fill="none"/><path d="M10.2 10.2 L14.5 14.5" stroke="#1b1b1b" stroke-width="1.8"/></svg>
<div class="a " style="left:391px;top:735.50px;font-size:13px;line-height:17px;color:#5a5a5a;font-weight:normal;">Search</div>
<svg class="a" style="left:548px;top:734px;" width="21" height="21" viewBox="0 0 21 21"><circle cx="10.5" cy="10.5" r="9" fill="#fff" stroke="#2b7bd8" stroke-width="1.6"/><path d="M2 19 L3.5 14" stroke="#2b7bd8" stroke-width="1.6"/><path d="M8 4.5 V14 Q8 15.5 10 15.5 Q14 15.5 14 12 Q14 9 10.5 9.5" stroke="#1f8ad6" stroke-width="1.8" fill="none"/></svg>
<svg class="a" style="left:586px;top:733px;" width="24" height="22" viewBox="0 0 24 22"><rect x="6" y="0" width="17" height="15" fill="#f4f4f4" stroke="#e0e0e0" stroke-width=".5"/><rect x="0" y="6" width="18" height="16" fill="#222"/><rect x="6" y="6" width="12" height="10" fill="#b8b8b8"/></svg>
<svg class="a" style="left:630px;top:733px;" width="24" height="23" viewBox="0 0 24 23"><defs><linearGradient id="tc" x1="0" y1="0" x2="1" y2="1"><stop offset="0" stop-color="#8a6fd6"/><stop offset="1" stop-color="#5560d0"/></linearGradient></defs><circle cx="12.5" cy="11" r="11" fill="url(#tc)"/><path d="M1 22.5 L3 15 L9 20Z" fill="#6c66d3"/><rect x="5" y="7" width="10" height="9" rx="1.5" fill="#fff"/><path d="M15 10 L19 8 V15 L15 13Z" fill="#fff"/></svg>
<svg class="a" style="left:674px;top:732px;" width="24" height="24" viewBox="0 0 24 24"><defs><radialGradient id="ff" cx=".7" cy=".2" r=".9"><stop offset="0" stop-color="#ffe11a"/><stop offset=".45" stop-color="#ff8a16"/><stop offset="1" stop-color="#e8224e"/></radialGradient></defs><circle cx="12" cy="13" r="11" fill="url(#ff)"/><circle cx="11" cy="13" r="5.2" fill="#7542e5"/><path d="M4 9 Q6 4 11 6 Q8 8 8 11Z" fill="#ff9a1a"/></svg>
<div class="a" style="left:711px;top:725px;width:38px;height:38px;border-radius:4px;background:#eff2f9;border:1px solid #e3e7ef;box-sizing:border-box"></div>
<svg class="a" style="left:718px;top:731px;" width="25" height="25" viewBox="0 0 25 25"><circle cx="12.5" cy="12.5" r="12" fill="#34a853"/><path d="M12.5 12.5 L2.1 6.5 A12 12 0 0 1 22.9 6.5Z" fill="#ea4335"/><path d="M12.5 12.5 L22.9 6.5 A12 12 0 0 1 12.5 24.5Z" fill="#fbbc04"/><circle cx="12.5" cy="12.5" r="5.6" fill="#fff"/><circle cx="12.5" cy="12.5" r="4.4" fill="#4285f4"/></svg>
<div class="a" style="left:732px;top:727px;width:15px;height:15px;border-radius:50%;background:#5c66c4;color:#fff;font-size:8.5px;line-height:15px;text-align:center">R</div>
<div class="a" style="left:722px;top:760px;width:16px;height:3px;background:#0067c0;border-radius:2px"></div>
<svg class="a" style="left:762px;top:732px;" width="24" height="24" viewBox="0 0 24 24"><path d="M17.5 0.5 L23.5 3.2 V20.8 L17.5 23.5 L7 13.8 L2.8 17 L0.5 15.8 V8.2 L2.8 7 L7 10.2Z" fill="#1f8fd8"/><path d="M17.5 0.5 L23.5 3.2 V20.8 L17.5 23.5Z" fill="#2aa0ea"/><path d="M17.5 6.5 L10.5 12 L17.5 17.5Z" fill="#e4ebf6"/><path d="M2.8 9.5 L5.5 12 L2.8 14.5Z" fill="#e4ebf6"/></svg>
<div class="a" style="left:772px;top:761px;width:6px;height:3px;background:#7a7d82;border-radius:2px"></div>
<svg class="a" style="left:806px;top:733px;" width="24" height="22" viewBox="0 0 24 22"><path d="M0 2 Q0 0.5 1.5 0.5 H8 L10 2.5 H0Z" fill="#e5a50a"/><rect x="0" y="3" width="24" height="19" fill="#fcd55c"/><rect x="0" y="3" width="24" height="2" fill="#f5bf2a"/><path d="M5 22 V16 Q5 14.5 6.5 14.5 H17.5 Q19 14.5 19 16 V22Z" fill="#1883d7"/></svg>
<div class="a" style="left:815px;top:761px;width:6px;height:3px;background:#7a7d82;border-radius:2px"></div>
<svg class="a" style="left:850px;top:732px;" width="24" height="24" viewBox="0 0 24 24"><defs><linearGradient id="eg" x1="0" y1="0" x2="1" y2="1"><stop offset="0" stop-color="#2fc1e6"/><stop offset=".6" stop-color="#1d8fdc"/><stop offset="1" stop-color="#50d86c"/></linearGradient></defs><circle cx="12" cy="12" r="11.5" fill="url(#eg)"/><path d="M2 13 Q2 23 12 23.5 Q17 23.5 20 19 Q14 21 10.5 17 Q8.5 14.5 10.5 12 Q7 10 2 13Z" fill="#0f5ea8"/><path d="M8 13.5 Q9 10 13 10 Q17 10 17 13 H10.5 Q10 16 13.5 17 Q9 17.5 8 13.5Z" fill="#e4ebf6"/></svg>
<svg class="a" style="left:894px;top:733px;" width="25" height="22" viewBox="0 0 25 22"><rect x="6" y="0" width="18" height="21" rx="1.5" fill="#2b7cd3"/><rect x="6" y="7" width="18" height="7" fill="#185abd"/><rect x="6" y="14" width="18" height="7" fill="#103f91"/><rect x="0" y="5" width="13" height="12" rx="1" fill="#185abd"/><path d="M2 7.5 L3.8 14.5 L6.5 9 L9.2 14.5 L11 7.5" stroke="#fff" stroke-width="1.5" fill="none"/></svg>
<svg class="a" style="left:939px;top:733px;" width="21" height="19" viewBox="0 0 21 19"><rect x="0" y="0" width="21" height="19" rx="1" fill="#1e4fa0"/><rect x="0.5" y="0.5" width="20" height="18" fill="none" stroke="#2d68c4" stroke-width=".8"/><path d="M4.5 13 V5.5 H7.5 Q10 5.5 10 8 Q10 10.5 7.5 10.5 H4.5" stroke="#e4ebf6" stroke-width="1.4" fill="none"/><path d="M16 8 Q14.5 7 13.2 7.8 Q12.2 8.8 13.8 9.8 Q15.8 10.6 15.2 12.2 Q14 13.2 12 12.2" stroke="#e4ebf6" stroke-width="1.3" fill="none"/></svg>
<svg class="a" style="left:982px;top:733px;" width="25" height="22" viewBox="0 0 25 22"><rect x="6" y="0" width="18" height="21" rx="1.5" fill="#21a366"/><rect x="6" y="7" width="18" height="7" fill="#107c41"/><rect x="6" y="14" width="18" height="7" fill="#185c37"/><rect x="15" y="0" width="9" height="7" fill="#33c481"/><rect x="0" y="5" width="13" height="12" rx="1" fill="#107c41"/><path d="M3.5 7.5 L9.5 14.5 M9.5 7.5 L3.5 14.5" stroke="#fff" stroke-width="1.6"/></svg>
<svg class="a" style="left:1026px;top:732px;" width="24" height="24" viewBox="0 0 24 24"><path d="M11 1 Q22 0 23 9 Q23.5 13 19 13 Q15 13 16 17 Q17 22 10 22 Q1 22 0.5 12 Q0.5 2 11 1Z" fill="#3fb6e8"/><circle cx="6" cy="11" r="2" fill="#d8553a"/><circle cx="9" cy="6" r="2" fill="#4bb543"/><circle cx="14" cy="4.5" r="2" fill="#f5c12c"/><path d="M20 8 L18.5 22" stroke="#8b5a2b" stroke-width="2.4"/><path d="M19 5.5 L21.5 5.5 L21 9.5 L19.2 9.5Z" fill="#e8d8b0"/></svg>
<div class="a" style="left:1035px;top:761px;width:6px;height:3px;background:#7a7d82;border-radius:2px"></div>
<svg class="a" style="left:1150px;top:740px;" width="12" height="8" viewBox="0 0 12 8"><path d="M1 6.5 L6 1.5 L11 6.5" stroke="#1b1b1b" stroke-width="1.3" fill="none"/></svg>
<svg class="a" style="left:1180px;top:737px;" width="17" height="13" viewBox="0 0 17 13"><path d="M1 5 Q8.5 -2 16 5 M3.5 7.5 Q8.5 2.5 13.5 7.5 M6 10 Q8.5 7.5 11 10" stroke="#1b1b1b" stroke-width="1.3" fill="none"/><circle cx="8.5" cy="11.8" r="1.2" fill="#1b1b1b"/></svg>
<svg class="a" style="left:1204px;top:738px;" width="16" height="12" viewBox="0 0 16 12"><path d="M1 4 H4 L8 0.8 V11.2 L4 8 H1Z" stroke="#1b1b1b" stroke-width="1.1" fill="none" stroke-linejoin="round"/><path d="M10.5 4 L14.5 8 M14.5 4 L10.5 8" stroke="#1b1b1b" stroke-width="1.1"/></svg>
<svg class="a" style="left:1228px;top:736px;" width="17" height="14" viewBox="0 0 17 14"><rect x="1" y="4.5" width="13" height="8" rx="1" stroke="#1b1b1b" stroke-width="1.2" fill="none"/><rect x="2.5" y="6" width="10" height="5" fill="#1b1b1b"/><rect x="14.3" y="7" width="1.8" height="3" fill="#1b1b1b"/><path d="M5 0.5 L3 4.5 H6 L4.5 7" stroke="#1b1b1b" stroke-width="1.1" fill="none"/></svg>
<div class="a" style="left:1223px;width:100px;text-align:right;top:729.12px;font-size:11.5px;line-height:15px;color:#1b1b1b;font-weight:normal;">08:52</div>
<div class="a" style="left:1223px;width:100px;text-align:right;top:744.37px;font-size:12.2px;line-height:16px;color:#1b1b1b;font-weight:normal;">10/06/2023</div>
<div class="a" style="left:1330px;top:736px;width:16px;height:16px;border-radius:50%;background:#0b5db4;color:#fff;font-size:10px;font-weight:bold;line-height:16px;text-align:center">1</div>
</body></html>
